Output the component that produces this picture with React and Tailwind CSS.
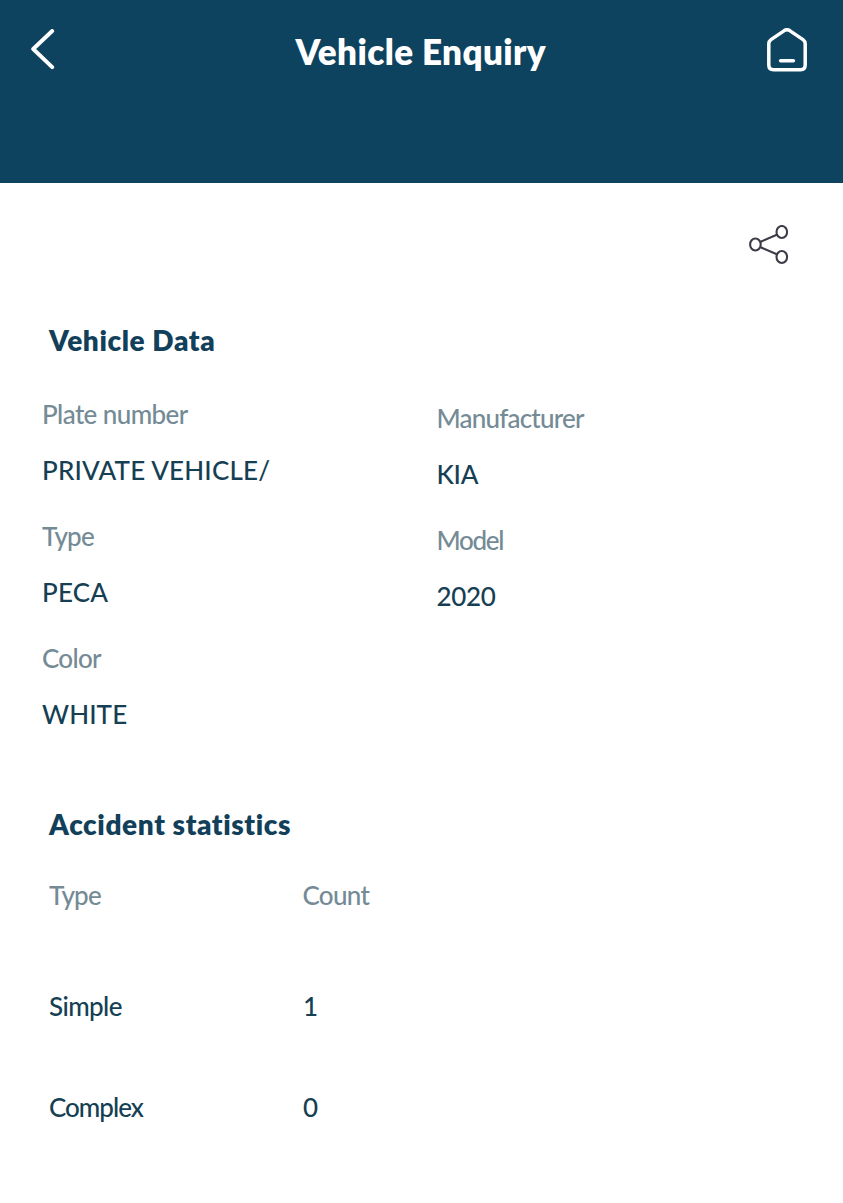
import clsx from "clsx";

const leftFields = [
  {
    label: "Plate number",
    value: "PRIVATE VEHICLE/",
    labelClass: "tracking-[-0.6px]",
    valueClass: "tracking-[0.18px]",
  },
  { label: "Type", value: "PECA", labelClass: "tracking-[-0.8px]", valueClass: "tracking-[0.2px]" },
  { label: "Color", value: "WHITE", labelClass: "tracking-[-0.7px]", valueClass: "tracking-[0.1px]" },
];

const rightFields = [
  { label: "Manufacturer", value: "KIA", labelClass: "tracking-[-0.8px]", valueClass: "tracking-[-0.3px]" },
  { label: "Model", value: "2020", labelClass: "tracking-[-1.3px]", valueClass: "tracking-[-0.3px]" },
];

const accidents = [
  { type: "Simple", count: 1, typeClass: "tracking-[-0.6px]" },
  { type: "Complex", count: 0, typeClass: "tracking-[-1px]" },
];

const BackIcon = () => (
  <svg width="24" height="42" viewBox="0 0 24 42" fill="none">
    <path
      d="M21.2 2 L2.2 20 L21.2 38.2"
      stroke="currentColor"
      strokeWidth="3.9"
      strokeLinecap="round"
      strokeLinejoin="round"
    />
  </svg>
);

const HomeIcon = () => (
  <svg width="40" height="44" viewBox="0 0 40 44" fill="none">
    <path
      d="M17.3 2.6 Q20 0.9 22.7 2.6 L36 11.6 Q38.2 13.2 38.2 15.8 V37 Q38.2 41.7 33.5 41.7 H6.5 Q1.8 41.7 1.8 37 V15.8 Q1.8 13.2 4 11.6 Z"
      stroke="currentColor"
      strokeWidth="3.5"
      strokeLinejoin="round"
    />
    <path d="M13.6 32.7 H26.4" stroke="currentColor" strokeWidth="3.5" strokeLinecap="round" />
  </svg>
);

const ShareIcon = () => (
  <svg width="40" height="40" viewBox="0 0 40 40" fill="none" stroke="currentColor" strokeWidth="2.1">
    <ellipse cx="6.4" cy="19.5" rx="5.3" ry="6" />
    <ellipse cx="32.8" cy="7" rx="5.3" ry="6" />
    <ellipse cx="32.8" cy="32" rx="5.3" ry="6" />
    <path d="M11.6 16.8 L27.8 9.7 M11.6 22.3 L27.8 29.2" />
  </svg>
);

const Field = ({ label, value, labelClass, valueClass }) => (
  <div className="h-[122px]">
    <p className={clsx("leading-10 text-[#748b96]", labelClass)}>{label}</p>
    <p className={clsx("mt-4 leading-10", valueClass)}>{value}</p>
  </div>
);

const App = () => {
  return (
    <div className="h-[1203px] w-[843px] overflow-hidden bg-white font-['Lato',sans-serif] text-[26px] font-medium text-[#163f54]">
      <header className="h-[183px] bg-[#0d435f] text-white">
        <div className="flex h-[100px] items-center justify-between pr-[35.5px] pl-[31px]">
          <button aria-label="Back" className="w-[43px]">
            <BackIcon />
          </button>
          <h1 className="pt-0.5 text-[35px] leading-10 font-extrabold tracking-[0.4px]">
            Vehicle Enquiry
          </h1>
          <button aria-label="Home">
            <HomeIcon />
          </button>
        </div>
      </header>

      <main>
        <div className="flex h-[137px] justify-end pt-[42px] pr-[54px] text-[#3b3c47]">
          <button aria-label="Share" className="h-10">
            <ShareIcon />
          </button>
        </div>

        <section className="pl-[42px]">
          <h2 className="pl-[7px] text-[28px] leading-10 font-extrabold tracking-[0.6px] text-[#123f59]">
            Vehicle Data
          </h2>
          <div className="mt-[34px] flex">
            <div className="w-[394.5px]">
              {leftFields.map((field) => (
                <Field key={field.label} {...field} />
              ))}
            </div>
            <div className="pt-1">
              {rightFields.map((field) => (
                <Field key={field.label} {...field} />
              ))}
            </div>
          </div>
        </section>

        <section className="mt-11 pl-[49px]">
          <h2 className="text-[28px] leading-10 font-extrabold tracking-[0.6px] text-[#123f59]">
            Accident statistics
          </h2>
          <div className="mt-[31px] flex leading-10 text-[#748b96]">
            <span className="w-[253.5px] tracking-[-0.8px]">Type</span>
            <span className="tracking-[-0.7px]">Count</span>
          </div>
          <div className="mt-[71px] flex flex-col gap-[61px]">
            {accidents.map(({ type, count, typeClass }) => (
              <div key={type} className="flex leading-10">
                <span className={clsx("w-[254px]", typeClass)}>{type}</span>
                <span>{count}</span>
              </div>
            ))}
          </div>
        </section>
      </main>
    </div>
  );
};

export default App;
